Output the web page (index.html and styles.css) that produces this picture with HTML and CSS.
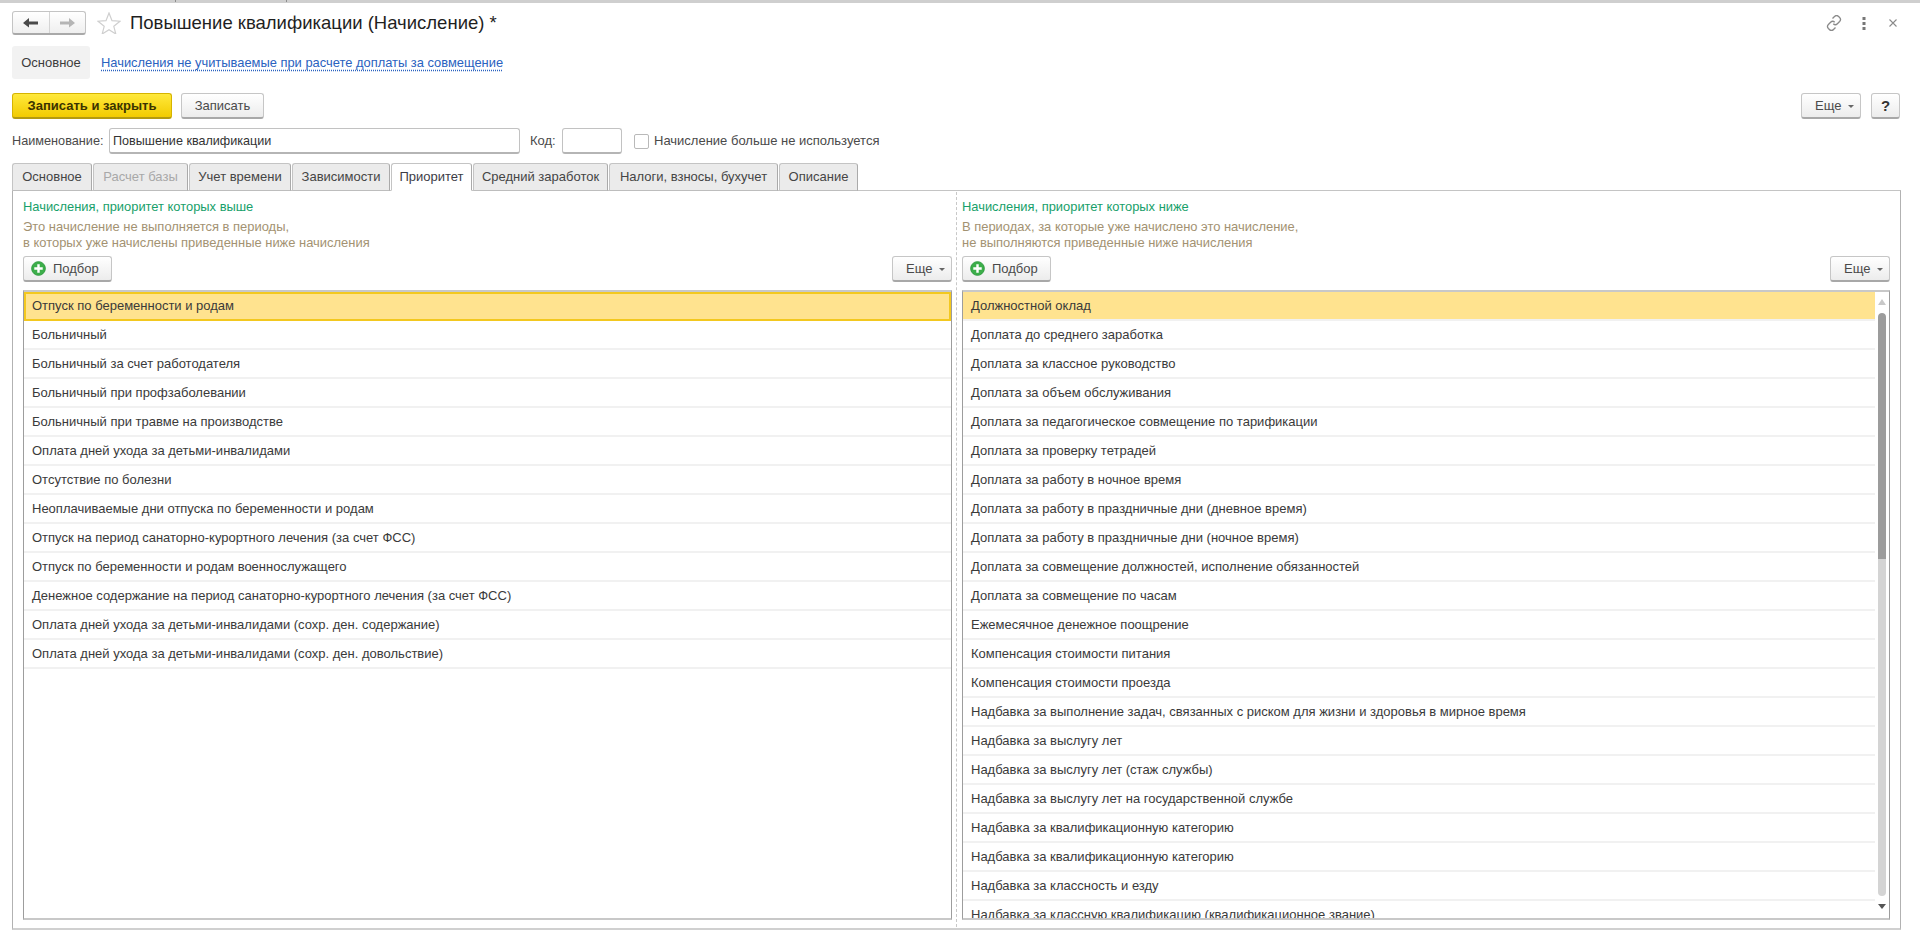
FILE: index.html
```html
<!DOCTYPE html>
<html lang="ru">
<head>
<meta charset="utf-8">
<title>Повышение квалификации (Начисление)</title>
<link rel="stylesheet" href="styles.css">
</head>
<body>
<div class="page">
  <div class="topline"><i class="tick t1"></i><i class="tick t2"></i></div>
  <header class="head">
    <div class="nav">
      <span class="nav-cell"><svg width="18" height="12" viewBox="0 0 18 12"><path d="M1 6l6-5v3.500h9v3H7v3z" fill="#4a4a4a"/></svg></span>
      <span class="nav-cell last"><svg width="18" height="12" viewBox="0 0 18 12"><path d="M17 6l-6-5v3.500H2v3h9v3z" fill="#b5b5b5"/></svg></span>
    </div>
    <svg class="star" width="24" height="22" viewBox="0 0 24 22"><path d="M12 1l3 7.600 8 .6-6.200 5.100 2 7.700L12 17.700 5.200 22l2-7.700L1 9.200l8-.6z" fill="#fff" stroke="#cfcfcf" stroke-width="1.200"/></svg>
    <h1 class="title">Повышение квалификации (Начисление) *</h1>
    <div class="head-icons">
      <svg class="ic-link" width="16" height="16" viewBox="0 0 16 16" fill="none" stroke="#8a8a8a" stroke-width="1.300"><path d="M6.500 3.500l2-2a2.900 2.900 0 0 1 4.100 0l1 1a2.900 2.900 0 0 1 0 4l-2.200 2.200a2.900 2.900 0 0 1-4.100 0"/><path d="M9.500 12.500l-2 2a2.900 2.900 0 0 1-4.100 0l-1-1a2.900 2.900 0 0 1 0-4l2.200-2.200a2.900 2.900 0 0 1 4.100 0"/></svg>
      <svg class="ic-more" width="4" height="13" viewBox="0 0 4 13" fill="#777"><rect x="0.500" y="0" width="3" height="3"/><rect x="0.500" y="5" width="3" height="3"/><rect x="0.500" y="10" width="3" height="3"/></svg>
      <svg class="ic-close" width="8" height="8" viewBox="0 0 8 8" stroke="#8a8a8a" stroke-width="1.100"><path d="M.5.500l7 7M7.500.500l-7 7"/></svg>
    </div>
  </header>
  <nav class="subnav">
    <span class="subnav-active">Основное</span>
    <a class="subnav-link" href="#">Начисления не учитываемые при расчете доплаты за совмещение</a>
  </nav>
  <div class="commands">
    <button class="btn btn-primary">Записать и закрыть</button>
    <button class="btn btn-save">Записать</button>
    <span class="spacer"></span>
    <button class="btn btn-more">Еще<i class="caret"></i></button>
    <button class="btn btn-help">?</button>
  </div>
  <div class="fields">
    <span class="lbl lbl-name">Наименование:</span>
    <div class="field field-name">Повышение квалификации</div>
    <span class="lbl lbl-code">Код:</span>
    <div class="field field-code"></div>
    <i class="checkbox"></i>
    <span class="lbl">Начисление больше не используется</span>
  </div>
  <div class="tabs">
    <span class="tab w1">Основное</span>
    <span class="tab w2 disabled">Расчет базы</span>
    <span class="tab w3">Учет времени</span>
    <span class="tab w4">Зависимости</span>
    <span class="tab w5 active">Приоритет</span>
    <span class="tab w6">Средний заработок</span>
    <span class="tab w7">Налоги, взносы, бухучет</span>
    <span class="tab w8">Описание</span>
  </div>
  <main class="panel">
    <section class="col">
      <div class="col-title">Начисления, приоритет которых выше</div>
      <div class="col-desc">Это начисление не выполняется в периоды,<br>в которых уже начислены приведенные ниже начисления</div>
      <div class="toolbar">
        <button class="btn btn-pick"><svg class="plus" width="15" height="15" viewBox="0 0 16 16"><circle cx="8" cy="8" r="7.300" fill="#3cae4a" stroke="#2c9a3c"/><path d="M8 3.500v9M3.500 8h9" stroke="#fff" stroke-width="2.600"/></svg>Подбор</button>
        <button class="btn btn-more">Еще<i class="caret"></i></button>
      </div>
      <div class="table">
        <div class="rows">
          <div class="row selected framed">Отпуск по беременности и родам</div>
          <div class="row">Больничный</div>
          <div class="row">Больничный за счет работодателя</div>
          <div class="row">Больничный при профзаболевании</div>
          <div class="row">Больничный при травме на производстве</div>
          <div class="row">Оплата дней ухода за детьми-инвалидами</div>
          <div class="row">Отсутствие по болезни</div>
          <div class="row">Неоплачиваемые дни отпуска по беременности и родам</div>
          <div class="row">Отпуск на период санаторно-курортного лечения (за счет ФСС)</div>
          <div class="row">Отпуск по беременности и родам военнослужащего</div>
          <div class="row">Денежное содержание на период санаторно-курортного лечения (за счет ФСС)</div>
          <div class="row">Оплата дней ухода за детьми-инвалидами (сохр. ден. содержание)</div>
          <div class="row">Оплата дней ухода за детьми-инвалидами (сохр. ден. довольствие)</div>
        </div>
      </div>
    </section>
    <div class="divider"></div>
    <section class="col">
      <div class="col-title">Начисления, приоритет которых ниже</div>
      <div class="col-desc">В периодах, за которые уже начислено это начисление,<br>не выполняются приведенные ниже начисления</div>
      <div class="toolbar">
        <button class="btn btn-pick"><svg class="plus" width="15" height="15" viewBox="0 0 16 16"><circle cx="8" cy="8" r="7.300" fill="#3cae4a" stroke="#2c9a3c"/><path d="M8 3.500v9M3.500 8h9" stroke="#fff" stroke-width="2.600"/></svg>Подбор</button>
        <button class="btn btn-more">Еще<i class="caret"></i></button>
      </div>
      <div class="table">
        <div class="rows">
          <div class="row selected">Должностной оклад</div>
          <div class="row">Доплата до среднего заработка</div>
          <div class="row">Доплата за классное руководство</div>
          <div class="row">Доплата за объем обслуживания</div>
          <div class="row">Доплата за педагогическое совмещение по тарификации</div>
          <div class="row">Доплата за проверку тетрадей</div>
          <div class="row">Доплата за работу в ночное время</div>
          <div class="row">Доплата за работу в праздничные дни (дневное время)</div>
          <div class="row">Доплата за работу в праздничные дни (ночное время)</div>
          <div class="row">Доплата за совмещение должностей, исполнение обязанностей</div>
          <div class="row">Доплата за совмещение по часам</div>
          <div class="row">Ежемесячное денежное поощрение</div>
          <div class="row">Компенсация стоимости питания</div>
          <div class="row">Компенсация стоимости проезда</div>
          <div class="row">Надбавка за выполнение задач, связанных с риском для жизни и здоровья в мирное время</div>
          <div class="row">Надбавка за выслугу лет</div>
          <div class="row">Надбавка за выслугу лет (стаж службы)</div>
          <div class="row">Надбавка за выслугу лет на государственной службе</div>
          <div class="row">Надбавка за квалификационную категорию</div>
          <div class="row">Надбавка за квалификационную категорию</div>
          <div class="row">Надбавка за классность и езду</div>
          <div class="row">Надбавка за классную квалификацию (квалификационное звание)</div>
        </div>
        <div class="scrollbar">
          <i class="arrow up"></i>
          <div class="track"><div class="thumb"></div></div>
          <i class="arrow down"></i>
        </div>
      </div>
    </section>
  </main>
</div>
</body>
</html>
```

FILE: styles.css
```css
* { box-sizing: border-box; }
html, body { margin: 0; height: 100%; background: #fff; overflow: hidden; }
body { font: 13px/16px "Liberation Sans", Arial, sans-serif; color: #3c3c3c; }

.page { height: 931px; display: flex; flex-direction: column; padding-bottom: 1px; overflow: hidden; }

.topline { height: 3px; background: #cfcfcf; position: relative; flex: none; }
.tick { position: absolute; top: 0; width: 1px; height: 2px; background: #8d8d8d; }
.t1 { left: 175px; }
.t2 { left: 286px; }

.head { display: flex; align-items: center; height: 24px; margin-top: 8px; padding-left: 12px; flex: none; }
.nav { display: flex; width: 74px; height: 24px; border: 1px solid #c4c4c4; border-bottom: 2px solid #a9a9a9; border-radius: 3px; background: linear-gradient(#fff, #efefef); }
.nav-cell { flex: 1; display: flex; align-items: center; justify-content: center; border-right: 1px solid #d4d4d4; }
.nav-cell.last { border-right: 0; }
.star { margin-left: 11px; flex: none; }
.title { margin: 0 0 0 9px; font-size: 18.5px; line-height: 24px; font-weight: 400; color: #1f1f1f; white-space: nowrap; }
.head-icons { margin-left: auto; display: flex; align-items: center; padding-right: 23px; }
.ic-more { margin-left: 20px; }
.ic-close { margin-left: 23px; }

.subnav { display: flex; align-items: center; height: 33px; margin-top: 11px; padding-left: 12px; flex: none; }
.subnav-active { width: 78px; height: 33px; line-height: 33px; text-align: center; background: #f2f2f2; border-radius: 3px; color: #3c3c3c; }
.subnav-link { margin-left: 11px; font-size: 12.9px; color: #2a62c0; text-decoration: underline dotted #2a62c0; text-underline-offset: 3px; white-space: nowrap; }

.btn { font: inherit; color: #4a4a4a; height: 26px; padding: 0; border: 1px solid #c6c6c6; border-bottom: 2px solid #a8a8a8; border-radius: 3px; background: linear-gradient(#fff, #ececec); display: inline-flex; align-items: center; justify-content: center; white-space: nowrap; flex: none; }

.commands { display: flex; align-items: center; height: 26px; margin-top: 14px; padding: 0 20px 0 12px; flex: none; }
.btn-primary { width: 160px; font-weight: 700; color: #3b3300; background: linear-gradient(#ffe93c, #f2cb00); border-color: #d6b400; border-bottom-color: #b39a10; }
.btn-save { width: 83px; margin-left: 9px; }
.spacer { flex: 1; }
.btn-more { width: 60px; justify-content: flex-start; padding-left: 13px; }
.btn-help { width: 29px; margin-left: 10px; font-weight: 700; font-size: 15px; color: #333; }
.caret { width: 0; height: 0; margin-left: 7px; margin-top: 2px; border: 3px solid transparent; border-top: 3px solid #666; border-bottom: 0; }

.fields { display: flex; align-items: center; height: 26px; margin-top: 9px; padding-left: 12px; flex: none; }
.lbl { color: #4a4a4a; white-space: nowrap; }
.lbl-name { width: 92px; font-size: 12.7px; }
.lbl-code { width: 26px; margin-left: 10px; }
.field { height: 26px; line-height: 24px; padding-left: 3px; border: 1px solid #c2c2c2; border-bottom: 2px solid #b5b5b5; border-radius: 3px; background: #fff; color: #333; flex: none; }
.field-name { width: 411px; margin-left: 5px; font-size: 12.6px; }
.field-code { width: 60px; margin-left: 6px; }
.checkbox { width: 15px; height: 15px; margin: 0 5px 0 12px; border: 1px solid #b9b9b9; border-radius: 2px; background: #fff; flex: none; }

.tabs { display: flex; height: 28px; margin-top: 9px; padding-left: 12px; flex: none; position: relative; z-index: 1; }
.tab { height: 28px; line-height: 26px; text-align: center; white-space: nowrap; color: #454545; background: #ebebeb; border: 1px solid #c4c4c4; border-right-color: #aaa; border-bottom: 1px solid #bdbdbd; border-radius: 3px 3px 0 0; margin-right: 1px; flex: none; }
.tab.disabled { color: #a8a8a8; }
.tab.active { background: #fff; border-bottom-color: #fff; color: #3c3c46; }
.w1 { width: 80px; }
.w2 { width: 95px; }
.w3 { width: 102px; }
.w4 { width: 98px; }
.w5 { width: 81px; }
.w6 { width: 135px; }
.w7 { width: 169px; }
.w8 { width: 79px; }

.panel { flex: 1; min-height: 0; margin: -1px 19px 0 12px; padding: 8px 9px 8px 10px; border: 1px solid #b2b2b2; border-top-color: #c4c4c4; border-bottom: 2px solid #d0d0d0; display: grid; grid-template-columns: 929px 10px 928px; }
.col { display: flex; flex-direction: column; min-width: 0; min-height: 0; }
.divider { margin: -7px 0 -7px 4px; width: 0; border-left: 1px dashed #c8c8c8; }
.col-title { font-size: 12.9px; color: #17a06a; white-space: nowrap; }
.col-desc { margin-top: 4px; font-size: 12.95px; color: #a39272; white-space: nowrap; }
.toolbar { display: flex; justify-content: space-between; margin-top: 5px; flex: none; }
.btn-pick { width: 89px; justify-content: flex-start; padding-left: 7px; }
.plus { margin-right: 7px; }

.table { flex: 1; min-height: 0; margin-top: 8px; display: flex; border: 1px solid #9d9d9d; border-top: 2px solid #c8c8c8; border-bottom: 2px solid #c8c8c8; overflow: hidden; }
.rows { flex: 1; min-width: 0; overflow: hidden; }
.row { height: 29px; line-height: 27px; padding-left: 8px; border-bottom: 2px solid #f1f1f1; color: #3a3a3a; white-space: nowrap; }
.row.selected { background: #ffe38f; }
.row.framed { height: 29px; line-height: 23px; padding-left: 6px; border: 2px solid #f3c81f; }

.scrollbar { width: 14px; flex: none; padding: 0 3px 0 2px; display: flex; flex-direction: column; align-items: center; }
.track { flex: none; width: 8px; height: 583px; margin-top: 8px; background: #d4d4d4; border-radius: 4px; overflow: hidden; }
.thumb { height: 246px; background: #9c9c9c; border-radius: 4px 4px 0 0; }
.arrow { flex: none; width: 0; height: 0; border: 4px solid transparent; }
.arrow.up { margin-top: 7px; border-top: 0; border-bottom: 6px solid #c8c8c8; }
.arrow.down { margin-top: 8px; border-bottom: 0; border-top: 5px solid #555; }
```
